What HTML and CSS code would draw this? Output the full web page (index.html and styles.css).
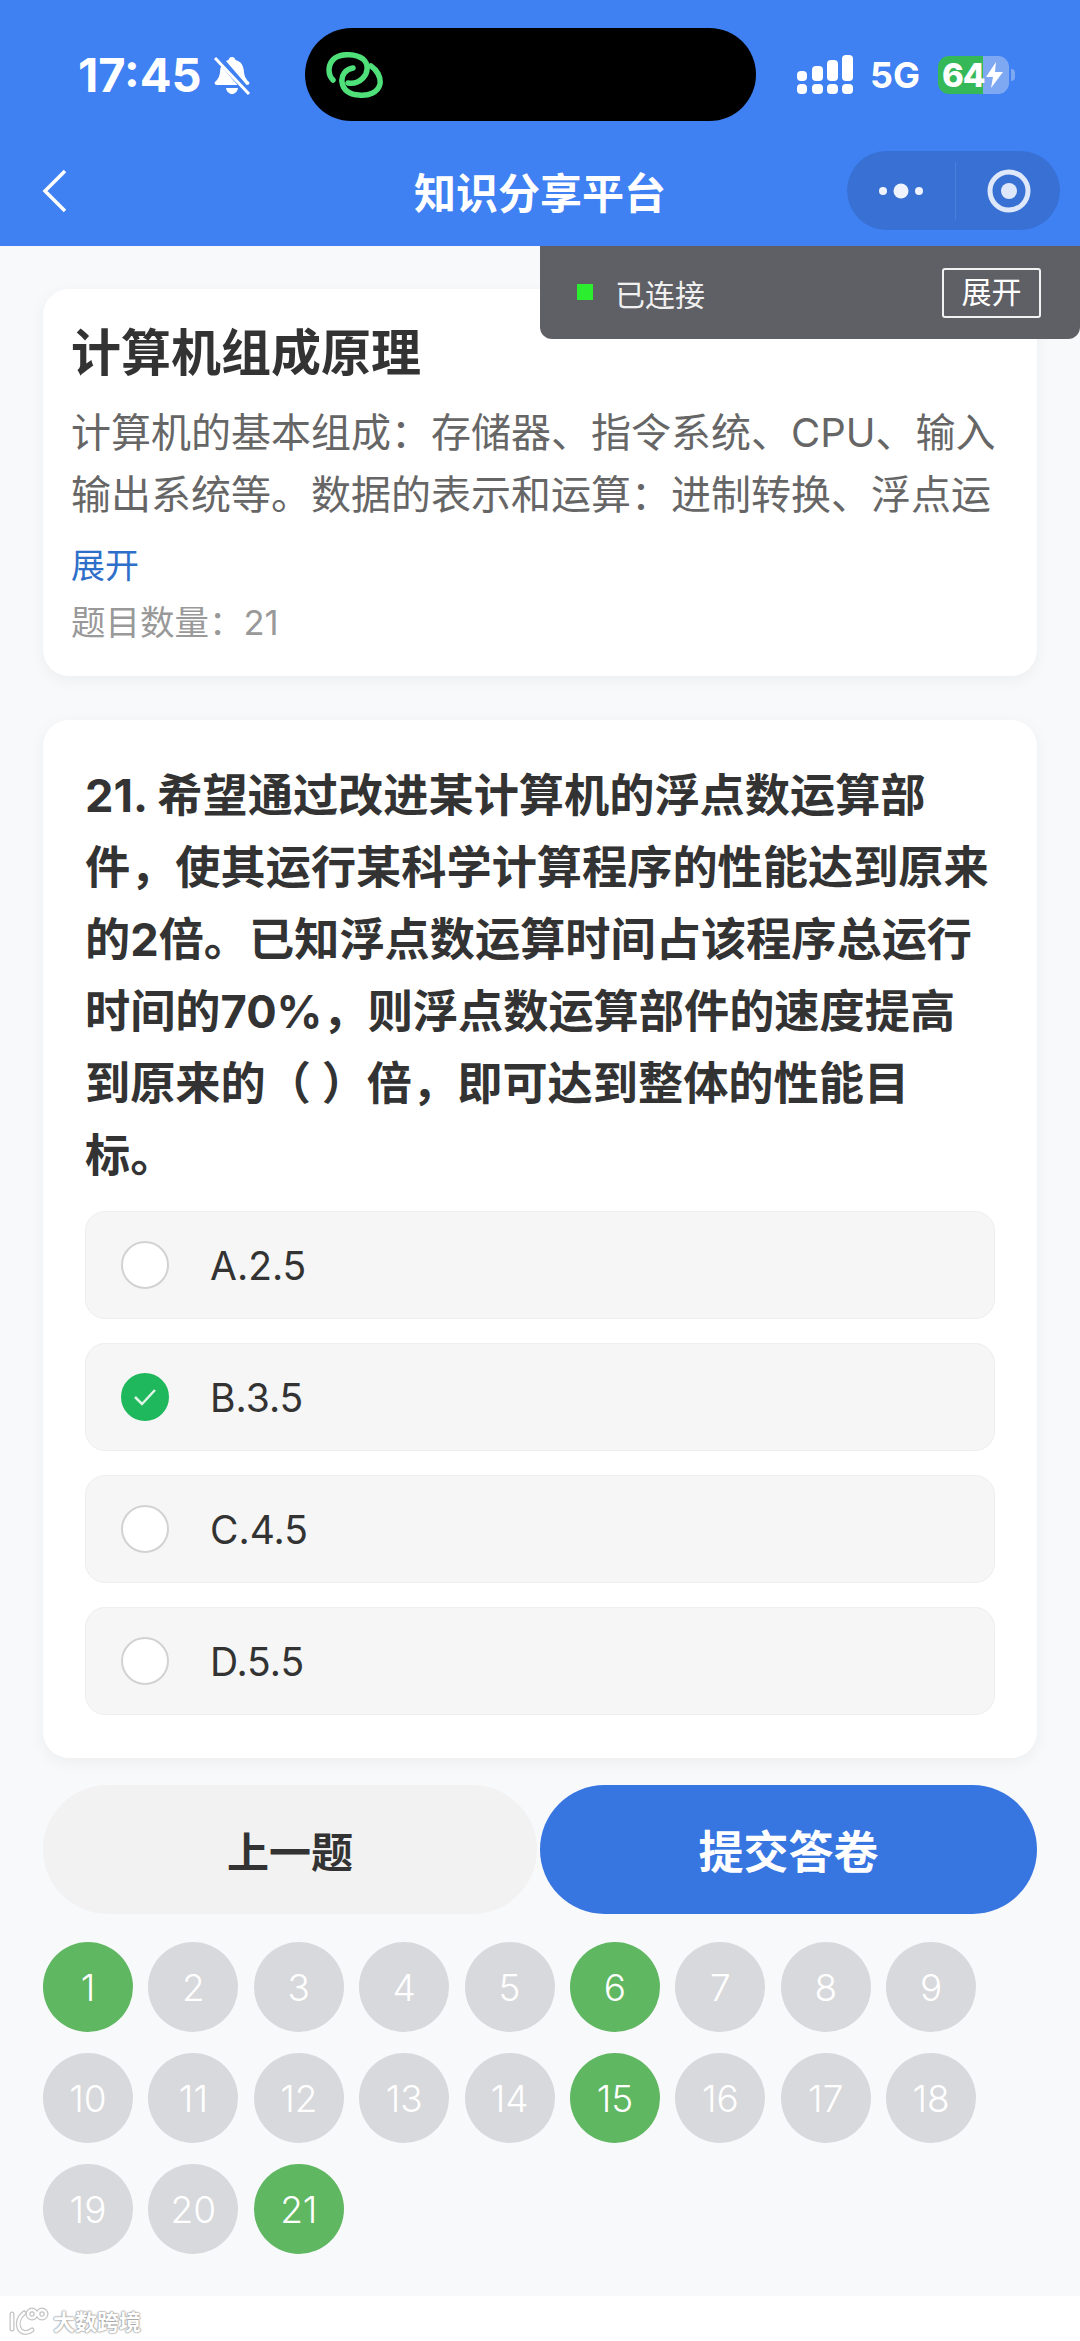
FILE: index.html
```html
<!DOCTYPE html>
<html lang="zh">
<head>
    <meta charset="utf-8">
    <title>知识分享平台</title>
    <link rel="stylesheet" href="styles.css">
</head>
<body>
    <div class="phone">
        <header class="header">
            <div class="status-bar">
                <div class="status-left">
                    <span class="time">17:45</span>
                    <svg class="bell" width="38" height="40" viewBox="0 0 38 40">
                        <path d="M19 2c2 0 3 1 3.500 3 6 1.500 8 6 8.500 12 .5 5 2 7 5 10 1 1.500 0 3-2 3H4c-2 0-3-1.500-2-3 3-3 4.500-5 5-10 .5-6 2.500-10.500 8.500-12 .5-2 1.500-3 3.500-3z" fill="#fff"/>
                        <path d="M13 33h12c-.5 3.500-3 6-6 6s-5.500-2.500-6-6z" fill="#fff"/>
                        <path d="M4 1l32 37" stroke="#3f80f3" stroke-width="7"/>
                        <path d="M2 3l34 36" stroke="#fff" stroke-width="3"/>
                    </svg>
                </div>
                <div class="island">
                    <svg width="58" height="46" viewBox="0 0 58 46" fill="none" stroke="#4fe07a" stroke-width="5.500" stroke-linecap="round">
                        <path d="M7 28C1 22 2 11 9 6c8-5 21-4 28 1 6 5 5 14 0 19-4 4-10 6-15 5"/>
                        <path d="M27 16c-7 1-12 7-11 14 1 8 8 13 17 13 9 1 19-2 21-11 1-7-3-14-9-18"/>
                    </svg>
                </div>
                <div class="status-right">
                    <svg width="56" height="40" viewBox="0 0 56 40" fill="#fff">
                        <rect x="0" y="16" width="10" height="10" rx="4"/>
                        <rect x="15" y="11" width="11" height="15" rx="4"/>
                        <rect x="30" y="5" width="11" height="21" rx="4"/>
                        <rect x="45" y="0" width="11" height="26" rx="4"/>
                        <rect x="0" y="29" width="10" height="10" rx="4"/>
                        <rect x="15" y="29" width="11" height="10" rx="4"/>
                        <rect x="30" y="29" width="11" height="10" rx="4"/>
                        <rect x="45" y="29" width="11" height="10" rx="4"/>
                    </svg>
                    <span class="net">5G</span>
                    <div class="battery">
                        <span class="battery-num">64</span>
                        <svg width="17" height="26" viewBox="0 0 17 26"><path d="M10 0L0 15h7l-2 11L17 10h-8z" fill="#fff"/></svg>
                    </div>
                    <span class="battery-nub"></span>
                </div>
            </div>
            <nav class="nav">
                <svg class="back" width="26" height="44" viewBox="0 0 26 44" fill="none" stroke="#fff" stroke-width="3.500"><path d="M23 2L3 22l20 20"/></svg>
                <div class="nav-title">知识分享平台</div>
                <div class="capsule">
                    <svg width="46" height="18" viewBox="0 0 46 18" fill="#eef3fd"><circle cx="5" cy="9" r="4"/><circle cx="23" cy="9" r="7.500"/><circle cx="41" cy="9" r="4"/></svg>
                    <span class="capsule-line"></span>
                    <svg width="46" height="46" viewBox="0 0 46 46"><circle cx="23" cy="23" r="19" fill="none" stroke="#dfe8fb" stroke-width="5"/><circle cx="23" cy="23" r="8" fill="#dfe8fb"/></svg>
                </div>
            </nav>
        </header>

        <div class="toast">
            <span class="toast-dot"></span>
            <span class="toast-text">已连接</span>
            <span class="toast-btn">展开</span>
        </div>

        <main class="content">
            <section class="card intro">
                <h1 class="intro-title">计算机组成原理</h1>
                <p class="intro-desc">计算机的基本组成：存储器、指令系统、CPU、输入输出系统等。数据的表示和运算：进制转换、浮点运</p>
                <div class="intro-more">展开</div>
                <div class="intro-count">题目数量：21</div>
            </section>

            <section class="card question">
                <h2 class="question-text">21. 希望通过改进某计算机的浮点数运算部件，使其运行某科学计算程序的性能达到原来的2倍。已知浮点数运算时间占该程序总运行时间的70%，则浮点数运算部件的速度提高到原来的（ ）倍，即可达到整体的性能目<br>标。</h2>
                <div class="options">
                    <div class="option"><span class="radio"></span>A.2.5</div>
                    <div class="option">
                        <span class="radio radio-on">
                            <svg width="24" height="20" viewBox="0 0 24 20" fill="none" stroke="#dff5e6" stroke-width="2.500"><path d="M2 10l7 7L22 3"/></svg>
                        </span>B.3.5
                    </div>
                    <div class="option"><span class="radio"></span>C.4.5</div>
                    <div class="option"><span class="radio"></span>D.5.5</div>
                </div>
            </section>

            <div class="actions">
                <div class="btn btn-prev">上一题</div>
                <div class="btn btn-submit">提交答卷</div>
            </div>

            <div class="numbers">
                <span class="num done">1</span>
                <span class="num">2</span>
                <span class="num">3</span>
                <span class="num">4</span>
                <span class="num">5</span>
                <span class="num done">6</span>
                <span class="num">7</span>
                <span class="num">8</span>
                <span class="num">9</span>
                <span class="num">10</span>
                <span class="num">11</span>
                <span class="num">12</span>
                <span class="num">13</span>
                <span class="num">14</span>
                <span class="num done">15</span>
                <span class="num">16</span>
                <span class="num">17</span>
                <span class="num">18</span>
                <span class="num">19</span>
                <span class="num">20</span>
                <span class="num done">21</span>
            </div>
        </main>

        <footer class="footer">
            <svg width="42" height="30" viewBox="0 0 42 30" fill="none" stroke-linecap="round">
                <g stroke="#c4c4c4" stroke-width="5">
                    <path d="M4 7v15"/>
                    <path d="M16 6c-5 4-7 10-5 15 2 5 8 6 13 2"/>
                    <circle cx="24" cy="7" r="4"/>
                    <circle cx="34" cy="7" r="4"/>
                </g>
                <g stroke="#fff" stroke-width="2.500">
                    <path d="M4 7v15"/>
                    <path d="M16 6c-5 4-7 10-5 15 2 5 8 6 13 2"/>
                    <circle cx="24" cy="7" r="4"/>
                    <circle cx="34" cy="7" r="4"/>
                </g>
            </svg>
            <span class="footer-text">大数跨境</span>
        </footer>
    </div>
</body>
</html>
```
FILE: styles.css
```css
* {
    box-sizing: border-box;
}

body {
    margin: 0;
    background-color: #fff;
    font-family: Inter, "Noto Sans CJK SC", sans-serif;
}

.phone {
    position: relative;
    width: 1080px;
    height: 2341px;
    overflow: hidden;
    background-color: #f8f9fb;
    display: flex;
    flex-direction: column;
}

/* header */
.header {
    height: 246px;
    flex-shrink: 0;
    background-color: #3f80f3;
    color: #fff;
}

.status-bar {
    height: 151px;
    padding: 28px 64px 30px 78px;
    display: flex;
    align-items: flex-start;
}

.status-left {
    width: 227px;
    height: 93px;
    display: flex;
    align-items: center;
    gap: 11px;
}

.time {
    font-size: 47px;
    font-weight: 700;
    line-height: 50px;
}

.island {
    width: 451px;
    height: 93px;
    padding-left: 21px;
    border-radius: 47px;
    background-color: #000;
    display: flex;
    align-items: center;
}

.status-right {
    height: 93px;
    margin-left: 41px;
    display: flex;
    align-items: center;
}

.net {
    width: 50px;
    margin-left: 17px;
    font-size: 36px;
    font-weight: 700;
}

.battery {
    width: 71px;
    height: 38px;
    margin-left: 18px;
    border-radius: 11px;
    background: linear-gradient(90deg, #35b858 63%, #7ea8f2 63%);
    display: flex;
    align-items: center;
    padding-left: 4px;
}

.battery-num {
    font-size: 33px;
    font-weight: 800;
    letter-spacing: -1px;
}

.battery svg {
    margin-left: 1px;
}

.battery-nub {
    width: 4px;
    height: 12px;
    margin-left: 2px;
    border-radius: 0 4px 4px 0;
    background-color: #7ea8f2;
}

.nav {
    display: grid;
    grid-template-columns: 1fr auto 1fr;
    align-items: center;
    height: 79px;
    padding: 0 20px;
}

.back {
    justify-self: start;
    margin-left: 22px;
}

.nav-title {
    font-size: 42px;
    font-weight: 700;
}

.capsule {
    justify-self: end;
    width: 213px;
    height: 79px;
    border-radius: 40px;
    background-color: #3870d3;
    display: flex;
    align-items: center;
    padding: 0 28px 0 31px;
    justify-content: space-between;
}

.capsule-line {
    width: 1px;
    height: 58px;
    background-color: #4a7fdc;
}

/* connection toast */
.toast {
    position: absolute;
    top: 246px;
    right: 0;
    width: 540px;
    height: 93px;
    border-radius: 0 0 12px 12px;
    background-color: #5f5f66;
    color: #fff;
    display: flex;
    align-items: center;
    padding: 0 39px 0 37px;
}

.toast-dot {
    width: 16px;
    height: 16px;
    background-color: #2bee2f;
    margin-bottom: 2px;
}

.toast-text {
    margin-left: 22px;
    font-size: 30px;
    color: #f0f0f0;
}

.toast-btn {
    margin-left: auto;
    width: 99px;
    height: 50px;
    border: 2px solid #f2f2f2;
    border-radius: 3px;
    font-size: 30px;
    text-align: center;
    line-height: 44px;
}

/* cards */
.content {
    flex: 1;
    padding: 43px 43px 0;
}

.card {
    background-color: #fff;
    border-radius: 26px;
    box-shadow: 0 4px 16px rgba(0, 0, 0, 0.05);
}

.intro {
    height: 387px;
    padding: 29px 29px 29px 28px;
}

.intro-title {
    margin: 0 0 14px;
    font-size: 50px;
    font-weight: 700;
    line-height: 70px;
    color: #333;
}

.intro-desc {
    margin: 0 0 15px;
    font-size: 40px;
    line-height: 62px;
    color: #666;
}

.intro-more {
    font-size: 34px;
    line-height: 50px;
    color: #2e6fc9;
}

.intro-count {
    margin-top: 7px;
    font-size: 34.500px;
    line-height: 50px;
    color: #999;
}

.question {
    margin-top: 44px;
    padding: 40px 42px 43px;
}

.question-text {
    margin: 0 0 19px;
    font-size: 45.200px;
    font-weight: 700;
    line-height: 72px;
    color: #333;
}

.options {
    display: flex;
    flex-direction: column;
    gap: 24px;
}

.option {
    height: 108px;
    padding-left: 35px;
    border: 1px solid #eeeeee;
    border-radius: 20px;
    background-color: #f6f6f6;
    display: flex;
    align-items: center;
    gap: 41px;
    font-size: 39px;
    color: #333;
}

.radio {
    width: 48px;
    height: 48px;
    border: 2px solid #d2d2d2;
    border-radius: 50%;
    background-color: #fff;
    display: flex;
    align-items: center;
    justify-content: center;
}

.radio-on {
    border-color: #1fb85c;
    background-color: #1fb85c;
}

/* bottom buttons */
.actions {
    margin-top: 27px;
    display: flex;
    gap: 3px;
}

.btn {
    height: 129px;
    border-radius: 65px;
    display: flex;
    align-items: center;
    justify-content: center;
    font-weight: 700;
}

.btn-prev {
    flex: 0 0 494px;
    background-color: #f2f2f3;
    color: #333;
    font-size: 42px;
}

.btn-submit {
    flex: 1;
    background-color: #3775e0;
    color: #fff;
    font-size: 45px;
}

/* question numbers */
.numbers {
    margin-top: 28px;
    display: grid;
    grid-template-columns: repeat(9, 90px);
    column-gap: 15.400px;
    row-gap: 21px;
}

.num {
    width: 90px;
    height: 90px;
    border-radius: 50%;
    background-color: #d8d9dc;
    color: #fff;
    font-size: 37px;
    font-weight: 300;
    display: flex;
    align-items: center;
    justify-content: center;
}

.num.done {
    background-color: #60b761;
}

.footer {
    height: 45px;
    flex-shrink: 0;
    background-color: #fff;
    padding: 11px 0 0 8px;
    display: flex;
    align-items: flex-start;
    gap: 3px;
}

.footer-text {
    font-size: 22px;
    line-height: 30px;
    font-weight: 700;
    color: #fff;
    text-shadow: 0 0 2px #999, 0 0 2px #999, 0 0 1px #888;
}
```
